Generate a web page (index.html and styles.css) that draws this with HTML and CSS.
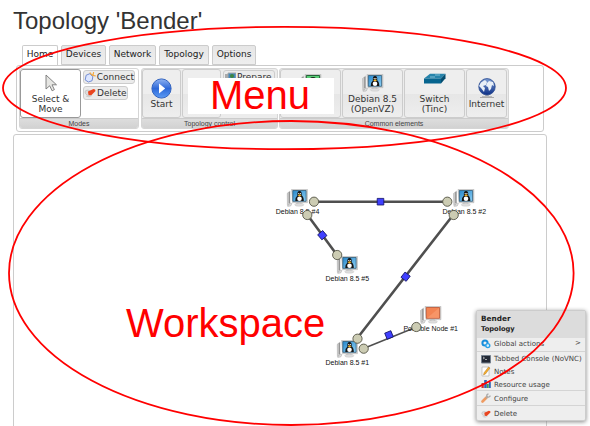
FILE: index.html
```html
<!DOCTYPE html>
<html lang="en">
<head>
<meta charset="utf-8">
<title>Topology 'Bender'</title>
<link rel="stylesheet" href="styles.css">
</head>
<body>
<svg class="defs" width="0" height="0">
  <defs>
    <linearGradient id="screen" x1="0" y1="0" x2="1" y2="1"><stop offset="0" stop-color="#2788cb"/><stop offset="1" stop-color="#8ed0f5"/></linearGradient>
    <linearGradient id="ball" x1="0" y1="0" x2="0" y2="1"><stop offset="0" stop-color="#8eb2f2"/><stop offset=".5" stop-color="#2d68d8"/><stop offset="1" stop-color="#5b9bf5"/></linearGradient>
    <linearGradient id="globe" x1="0" y1="0" x2="0" y2="1"><stop offset="0" stop-color="#7d9ed4"/><stop offset="1" stop-color="#0c2f86"/></linearGradient>
    <symbol id="case" viewBox="0 0 22 18">
      <path d="M0.5 4.5 3.5 2v13L.8 16.5z" fill="#ccc" stroke="#aaa" stroke-width=".5"/>
      <path d="M2.8 3v11" stroke="#777" stroke-width=".8"/><path d="M3.5 14l2 .5-1.3 2.5-3 .4z" fill="#ddd" stroke="#999" stroke-width=".4"/>
      <path d="M10.5 13h4l1 2.5h-6z" fill="#aaa"/><ellipse cx="12.8" cy="15.7" rx="4.6" ry="1.6" fill="#ddd" stroke="#bbb" stroke-width=".3"/>
      <path d="M5 .3h16v13.4H6z" fill="#d0d0d0" stroke="#aaa" stroke-width=".4"/>
    </symbol>
    <symbol id="pc" viewBox="0 0 22 18">
      <use href="#case"/>
      <path d="M6.3 1.5h13.3v10.8H6.3z" fill="url(#screen)" stroke="#25516e" stroke-width=".7"/>
      <path d="M8.8 12q0-4 2.1-5.6-.5-4.4 2.1-4.4 2.6 0 2.2 4.3 2.1 1.5 2.1 5.7z" fill="#151515"/>
      <ellipse cx="13" cy="9.8" rx="2.3" ry="2.3" fill="#fff"/><circle cx="12.2" cy="4.6" r=".7" fill="#eee"/><circle cx="13.9" cy="4.6" r=".7" fill="#eee"/><path d="M11.2 6.2l1.8-1 2 1-2 1.4z" fill="#f7b521"/>
    </symbol>
    <symbol id="node" viewBox="0 0 22 18"><use href="#case"/><path d="M6.3 1.5h13.3v10.8H6.3z" fill="#f38453" stroke="#b94a27" stroke-width=".7"/><path d="M7 12 19 2v10z" fill="#fba67b" opacity=".5"/></symbol>
    <symbol id="eraser" viewBox="0 0 12 12"><path d="M1 5q0-2 3-2l3 1-2 5-2-1q-2-1-2-3z" fill="#ddd" stroke="#aaa" stroke-width=".5"/><path d="M4 4.5 9.5 2q2 0 2 2L7 8.5 4.5 8z" fill="#e9451f"/><path d="M2 9q3 2 6-.5" stroke="#ccc" fill="none"/></symbol>
  </defs>
</svg>

<h1 class="title">Topology 'Bender'</h1>

<nav class="tabs">
  <span class="tab tab-active">Home</span><span class="tab devices">Devices</span><span class="tab network">Network</span><span class="tab topology">Topology</span><span class="tab options">Options</span>
</nav>

<section class="ribbon">
  <div class="group modes">
    <div class="tools">
      <button class="big wide selected"><svg width="14" height="18" viewBox="0 0 14 18"><path d="M2 1v14l3.7-3.2 2.4 5 2.3-1.2L8 10.8h4.5z" fill="#e6e6e3" stroke="#777" stroke-width=".9"/></svg><span>Select &amp;<br>Move</span></button>
      <div class="stack">
        <button class="small connect"><svg width="12" height="12" viewBox="0 0 12 12"><path d="M2.2 4.2 6 2.6l3 3.2-.8 4-3.7 1.3L1.2 9z" fill="#dce6ff" stroke="#718bd2"/><path d="M6 1.5q1 2 3 3M9.8 1l-.7 3.4L12 5" fill="none" stroke="#f4a83d" stroke-width="1.2"/></svg>Connect</button>
        <button class="small delete"><svg width="12" height="12"><use href="#eraser"/></svg>Delete</button>
      </div>
    </div>
    <div class="caption">Modes</div>
  </div>
  <div class="group control">
    <div class="tools">
      <button class="big slim"><svg width="21" height="21" viewBox="0 0 21 21"><circle cx="10.5" cy="10.5" r="9.6" fill="url(#ball)" stroke="#3565bf"/><path d="M8 5.5v10l6.2-5z" fill="#fff"/></svg><span>Start</span></button>
      <button class="big slim"></button>
      <div class="stack"><button class="small prepare"><svg width="12" height="12" viewBox="0 0 12 12"><path d="M4 2h8v6H4z" fill="#4388bb" stroke="#aaa"/><path d="M1 3h3v8H1z" fill="#aaa"/><circle cx="8" cy="5" r="2" fill="#3e853f"/></svg>Prepare</button></div>
    </div>
    <div class="caption">Topology control</div>
  </div>
  <div class="group elements">
    <div class="tools">
      <button class="big wide"><svg width="22" height="18" viewBox="0 0 22 18"><use href="#case"/><path d="M6.3 1.5h13.3v10.8H6.3z" fill="#58cf76" stroke="#28633a"/><path d="M9 8q0-5 4-5t4 5z" fill="#222"/></svg></button>
      <button class="big wide"><svg width="22" height="18"><use href="#pc"/></svg><span>Debian 8.5<br>(OpenVZ)</span></button>
      <button class="big wide"><svg class="switch" width="23" height="18" viewBox="0 1 23 18"><path d="M1 5.5 7 .8h15.5L18 5.5z" fill="#2784ab"/><path d="M1 5.5h17v5H1z" fill="#07658f"/><path d="m18 5.5 4.5-4.7v4.4L18 10.5z" fill="#044d70"/><path d="M7 4h5m0-2h5" stroke="#a8d5e7" stroke-width=".7"/></svg><span>Switch<br>(Tinc)</span></button>
      <button class="big slim internet"><svg width="20" height="21" viewBox="0 0 20 21"><path d="M8 16h4v2h3v2H5v-2h3z" fill="#b9b9b9"/><path d="M3 19.5h14" stroke="#aaa"/><circle cx="10" cy="8.8" r="8.2" fill="url(#globe)" stroke="#24458d" stroke-width=".8"/><path d="M4 4.5 8 2l2 2-1 3-3 1 2 2-1 4-3-4-2-2zM12 3l4 1 1 4-2-1-1 4-2 2-1-4-2-1 1-3z" fill="#e8eff7"/></svg><span>Internet</span></button>
    </div>
    <div class="caption">Common elements</div>
  </div>
</section>

<main class="workspace">
  <svg class="canvas" width="560" height="291" viewBox="14 135 560 291">
    <g class="links">
      <path d="M314 201.7h133M307.5 215 337 255M453.5 214.5 357 338.5"/><path class="thin" d="M363.5 348.5 416.5 327"/>
    </g>
    <use href="#pc" x="286.5" y="189" width="22" height="18"/><use href="#pc" x="453" y="189" width="22" height="18"/>
    <use href="#pc" x="336.5" y="256" width="22" height="18"/><use href="#pc" x="336.5" y="340" width="22" height="18"/>
    <use href="#node" x="420" y="306" width="22" height="18"/>
    <g class="labels">
      <text x="297.5" y="214">Debian 8.5 #4</text><text x="464.3" y="214">Debian 8.5 #2</text><text x="347.3" y="281">Debian 8.5 #5</text><text x="347.3" y="365">Debian 8.5 #1</text><text x="430.7" y="331">Portable Node #1</text>
    </g>
    <g class="ports"><circle cx="314" cy="201.7" r="4.6"/><circle cx="307.3" cy="215" r="4.6"/><circle cx="337.2" cy="255" r="4.6"/><circle cx="447.3" cy="201.7" r="4.6"/><circle cx="453.7" cy="215" r="4.6"/><circle cx="357.5" cy="338.7" r="4.6"/><circle cx="363.7" cy="348.7" r="4.6"/><circle cx="416.3" cy="327" r="4.6"/></g>
    <g class="joints"><path d="M377.2 198.4h6.6v6.6h-6.6z"/><path transform="rotate(50 322.3 235.2)" d="M319 231.9h6.6v6.6H319z"/><path transform="rotate(38 405.6 276.7)" d="M402.3 273.4h6.6v6.6h-6.6z"/><path transform="rotate(-22 389 335)" d="M385.7 331.7h6.6v6.6h-6.6z"/></g>
  </svg>
</main>

<aside class="context-menu">
  <header>Bender<br><span>Topology</span></header>
  <div class="item global"><svg width="10" height="10" viewBox="0 0 10 10"><circle cx="4" cy="4" r="2.6" fill="none" stroke="#168ddb" stroke-width="2"/><circle cx="6.8" cy="6.6" r="2" fill="#d4efff" stroke="#28a1e8" stroke-width="1.4"/></svg>Global actions<b>&gt;</b></div>
  <div class="item console"><svg width="10" height="10" viewBox="0 0 10 10"><path d="M.5 1.5h9v7.5h-9z" fill="#222936" stroke="#75808e"/><path d="m2 3 1.5 1L2 5M4 5.5h2" stroke="#ddd" fill="none" stroke-width=".7"/></svg>Tabbed Console (NoVNC)</div>
  <div class="item"><svg width="10" height="11" viewBox="0 0 10 11"><path d="M1 1h7v9H1z" fill="#fff" stroke="#aaa" stroke-width=".6"/><path d="M2.5 9 3 6.8 7.5 1 9 2 4.5 8z" fill="#f5ae2b" stroke="#9b6827" stroke-width=".4"/></svg>Notes</div>
  <div class="item last"><svg width="10" height="10" viewBox="0 0 10 10"><path d="M.5 4h2.3v5H.5z" fill="#c73535"/><path d="M3.2 1h2.6v8H3.2z" fill="#3465b4"/><path d="M6 5h1.7v4H6z" fill="#46a34b"/><path d="M7.8 3h2v6h-2z" fill="#3465b4"/></svg>Resource usage</div>
  <div class="item single"><svg width="10" height="10" viewBox="0 0 10 10"><path d="m1.5 8.5 4-4" stroke="#ee9b62" stroke-width="2.6" stroke-linecap="round"/><path d="M5 5.2 6.6 3.6M7.5.8Q5.2 1.5 6 3.6q1.8 1.5 3.5-1" fill="none" stroke="#aaa" stroke-width="1.4"/></svg>Configure</div>
  <div class="item remove"><svg width="10" height="10" viewBox="0 0 12 12"><use href="#eraser" width="12" height="12"/></svg>Delete</div>
</aside>

<div class="menu-note">Menu</div>
<div class="workspace-note">Workspace</div>
<svg class="outlines" width="590" height="426"><ellipse cx="284.5" cy="88" rx="281.5" ry="61.2"/><ellipse cx="291.3" cy="273" rx="282.3" ry="152"/></svg>
</body>
</html>
```
FILE: styles.css
```css
* { box-sizing: border-box; }
body { margin: 0; width: 590px; height: 426px; overflow: hidden; position: relative; background: #fff; color: #333; font-family: "DejaVu Sans", sans-serif; }
.defs { position: absolute; }
.title { margin: 0; padding: 6px 0 0 13px; height: 45px; font: 24px/30px "Liberation Sans", sans-serif; }
.tabs { display: flex; height: 20px; padding-left: 22px; gap: 3px; }
.tab { width: 46px; border: 1px solid #ccc; border-radius: 2px 2px 0 0; background: linear-gradient(#e6e6e6, #eee); color: #222; font-size: 9px; line-height: 16px; text-align: center; white-space: nowrap; }
.tab-active { width: 36px; background: #fff; border-bottom: 0; }
.devices { width: 45px; }
.network { width: 47px; }
.topology { width: 50px; }
.options { width: 44px; }
.ribbon { display: flex; gap: 1px; width: 528px; height: 67px; margin-left: 16px; padding: 2px; border: 1px solid #ccc; border-radius: 3px; }
.group { height: 61px; border-radius: 3px; border: 1px solid #d5d5d5; background: #fff; overflow: hidden; }
.modes { width: 120px; margin-right: 1px; }
.control { width: 137px; }
.elements { width: 230px; }
.control, .elements { background: #ececec; }
.tools { display: flex; height: 49px; gap: 1px; }
.caption { height: 10px; border-top: 1px solid #ccc; background: linear-gradient(#ddd, #d2d2d2); color: #444; font: 7px/10px "Liberation Sans", sans-serif; text-align: center; }
button { border: 1px solid #ccc; border-radius: 3px; background: #ebebeb; color: #333; font: 9px/10px "DejaVu Sans", sans-serif; padding: 0; margin: 0; }
.big { display: flex; flex-direction: column; align-items: center; flex: none; height: 49px; padding-top: 4px; background: linear-gradient(#eee 0 50%, #e6e6e6 50%, #eee); }
.big svg { flex: none; }
.big span { margin-top: 1px; white-space: nowrap; }
.wide { width: 61px; }
.wide span { margin-top: 2px; }
.slim { width: 39px; padding-top: 8px; }
.slim span { margin-top: 0; }
.internet { width: 41px; }
.selected { background: #fff; border-color: #999; }
.stack { display: flex; flex-direction: column; align-items: flex-start; gap: 2px; padding: 1px 0 0 1px; }
.small { display: flex; align-items: center; gap: 1px; height: 14px; white-space: nowrap; }
.connect { width: 52px; }
.delete { width: 45px; }
.prepare { width: 52px; }
.switch { overflow: visible; }
.workspace { width: 534px; height: 300px; margin: 2px 0 0 13px; border: 1px solid #ccc; border-radius: 3px; }
.canvas { display: block; overflow: visible; }
.links { stroke: #4f4f4f; stroke-width: 2.6; fill: none; }
.thin { stroke-width: 1.5; }
.labels { font: 7px "Liberation Sans", sans-serif; fill: #111; text-anchor: middle; }
.ports { fill: #ccccb3; stroke: #555546; stroke-width: .9; }
.joints { fill: #4040ff; stroke: #111166; stroke-width: .8; }
.context-menu { position: absolute; left: 476px; top: 310px; width: 110px; height: 111px; border: 1px solid #ccc; border-radius: 2px; background: #eee; box-shadow: 0 1px 4px #888; color: #444; font-size: 7.05px; }
.context-menu header { height: 27px; padding: 3px 4px; background: #dcdcdc; color: #222; font-size: 7.3px; font-weight: bold; line-height: 10px; }
.context-menu header span { font-size: 6.7px; }
.item { display: flex; align-items: center; gap: 3px; height: 13px; padding-left: 4px; white-space: nowrap; }
.item b { margin-left: auto; margin-right: 4px; font-weight: normal; transform: translateY(-1px); }
.global { height: 14px; border-bottom: 1px solid #d4d4d4; padding-bottom: 2px; }
.last { border-bottom: 1px solid #d4d4d4; }
.single { height: 15px; border-bottom: 1px solid #d4d4d4; }
.remove { height: 15px; }
.menu-note, .workspace-note { position: absolute; color: #f00; font: 40px/44px "Liberation Sans", sans-serif; white-space: nowrap; }
.menu-note { left: 188px; top: 78px; width: 146px; height: 36px; padding-left: 22px; background: #fff; line-height: 35px; }
.workspace-note { left: 126px; top: 301px; }
.outlines { position: absolute; left: 0; top: 0; fill: none; stroke: #f00; stroke-width: 1.8; pointer-events: none; }
```
